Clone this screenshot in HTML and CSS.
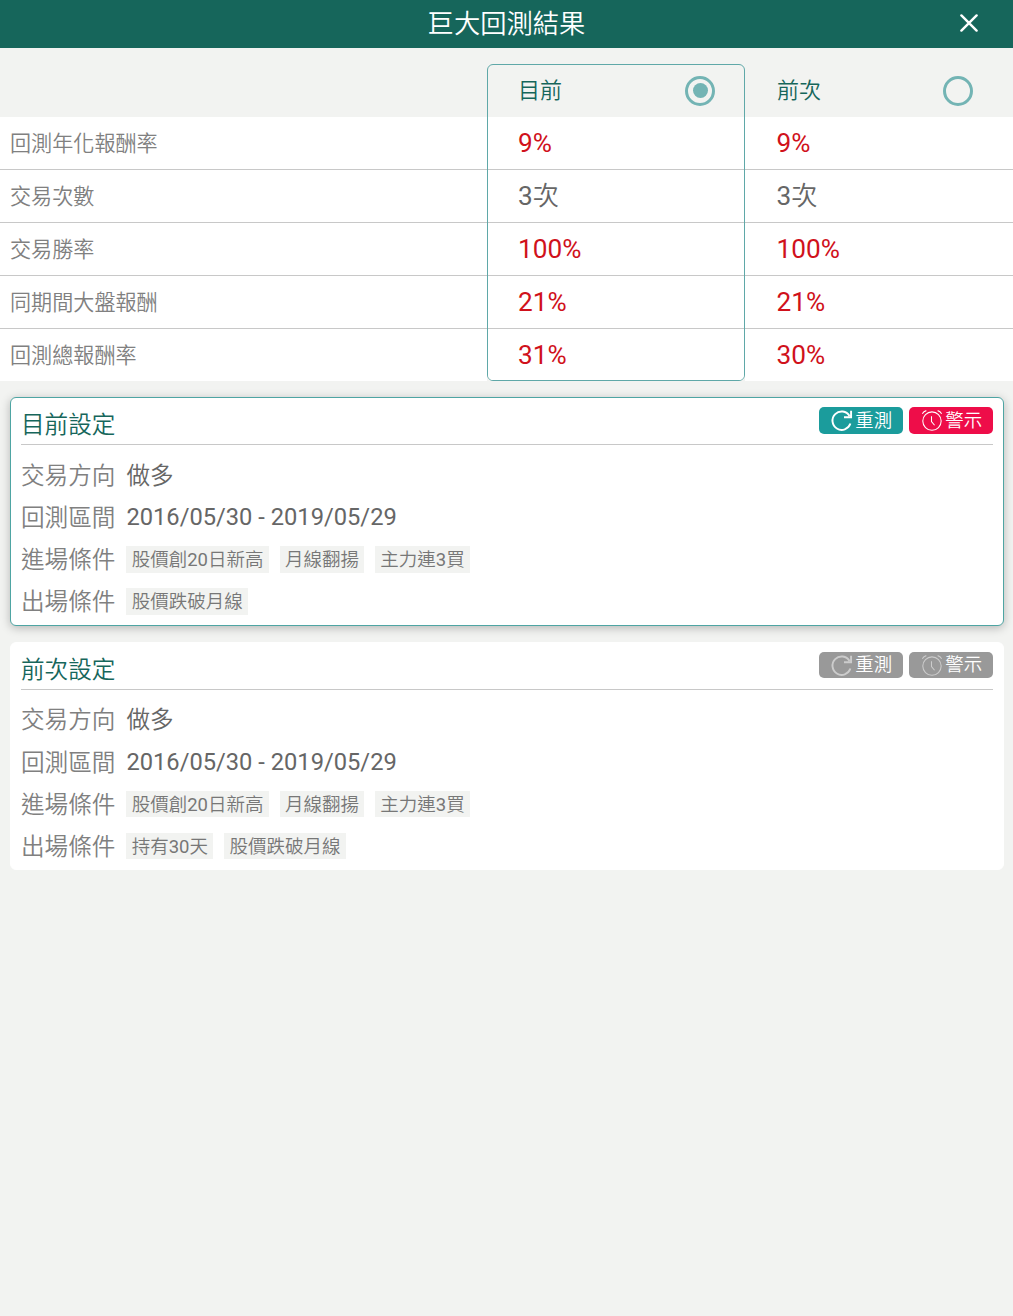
FILE: index.html
```html
<!DOCTYPE html>
<html lang="zh-Hant">
<head>
<meta charset="utf-8">
<title>巨大回測結果</title>
<link rel="stylesheet" href="styles.css">
</head>
<body>
<svg class="sprite" aria-hidden="true">
  <symbol id="reload" viewBox="0 0 24 24"><path d="M20.4 7.2A9.6 9.6 0 1 0 21.3 15.2M14.6 8.6h7.4V1.8" fill="none" stroke="currentColor" stroke-width="2"/></symbol>
  <symbol id="alarm" viewBox="0 0 24 24"><path d="M12.5 3a9.6 9.6 0 1 0 0 19.2a9.6 9.6 0 0 0 0-19.2M12 7.5v5.5l3.2 4M2.4 5Q3.8 2.4 6.6 1.7M22.6 5Q21.2 2.4 18.4 1.7" fill="none" stroke="currentColor" stroke-width="1.1"/></symbol>
</svg>
<header class="topbar">
  <h1>巨大回測結果</h1>
  <button class="close" aria-label="關閉"><svg viewBox="0 0 18 18"><path d="M1.4 1.4l15.2 15.2M16.6 1.4l-15.2 15.2" fill="none" stroke="currentColor" stroke-width="2.4" stroke-linecap="round"/></svg></button>
</header>
<section class="results">
  <div class="col labels">
    <div class="head"></div>
    <div class="cell">回測年化報酬率</div><div class="cell">交易次數</div><div class="cell">交易勝率</div><div class="cell">同期間大盤報酬</div><div class="cell">回測總報酬率</div>
  </div>
  <div class="col current">
    <div class="head"><span>目前</span><i class="radio on"></i></div>
    <div class="cell red">9%</div><div class="cell">3<span class="unit">次</span></div><div class="cell red">100%</div><div class="cell red">21%</div><div class="cell red">31%</div>
  </div>
  <div class="col previous">
    <div class="head"><span>前次</span><i class="radio"></i></div>
    <div class="cell red">9%</div><div class="cell">3<span class="unit">次</span></div><div class="cell red">100%</div><div class="cell red">21%</div><div class="cell red">30%</div>
  </div>
</section>
<section class="card active">
  <div class="card-head"><h2>目前設定</h2>
    <div class="actions"><button class="btn retest"><svg><use href="#reload"/></svg>重測</button><button class="btn alert"><svg><use href="#alarm"/></svg>警示</button></div>
  </div>
  <dl>
    <div class="row"><dt>交易方向</dt><dd class="direction">做多</dd></div>
    <div class="row"><dt>回測區間</dt><dd class="num">2016/05/30 - 2019/05/29</dd></div>
    <div class="row"><dt>進場條件</dt><dd><span class="tag">股價創<span class="num">20</span>日新高</span><span class="tag">月線翻揚</span><span class="tag">主力連<span class="num">3</span>買</span></dd></div>
    <div class="row"><dt>出場條件</dt><dd><span class="tag">股價跌破月線</span></dd></div>
  </dl>
</section>
<section class="card">
  <div class="card-head"><h2>前次設定</h2>
    <div class="actions"><button class="btn off"><svg><use href="#reload"/></svg>重測</button><button class="btn off"><svg><use href="#alarm"/></svg>警示</button></div>
  </div>
  <dl>
    <div class="row"><dt>交易方向</dt><dd class="direction">做多</dd></div>
    <div class="row"><dt>回測區間</dt><dd class="num">2016/05/30 - 2019/05/29</dd></div>
    <div class="row"><dt>進場條件</dt><dd><span class="tag">股價創<span class="num">20</span>日新高</span><span class="tag">月線翻揚</span><span class="tag">主力連<span class="num">3</span>買</span></dd></div>
    <div class="row"><dt>出場條件</dt><dd><span class="tag">持有<span class="num">30</span>天</span><span class="tag">股價跌破月線</span></dd></div>
  </dl>
</section>
</body>
</html>
```
FILE: styles.css
```css
* { box-sizing: border-box; }
body {
  margin: 0;
  min-height: 1316px;
  background: #f2f3f1;
  color: #666;
  font-family: Roboto, "Noto Sans CJK TC", sans-serif;
  font-weight: 350;
}
h1, h2, dl, dt, dd { margin: 0; font-weight: 350; }
button { border: 0; padding: 0; font: inherit; }
.sprite { display: none; }

.topbar {
  display: grid;
  grid-template-columns: 88px 1fr 88px;
  align-items: center;
  height: 48px;
  background: #16665b;
  color: #fff;
}
.topbar h1 { grid-column: 2; text-align: center; font-size: 26.3px; line-height: 46px; }
.close { justify-self: center; width: 18px; height: 18px; margin-bottom: 2px; background: none; color: #fff; }
.close svg { display: block; width: 18px; height: 18px; }

.results {
  display: grid;
  grid-template-columns: 487px 258px 268px;
  padding-top: 16px;
}
.head {
  display: flex;
  align-items: center;
  justify-content: space-between;
  height: 53px;
  color: #16665b;
  font-size: 22px;
}
.head span { line-height: 30px; }
.cell {
  height: 53px;
  border-bottom: 1px solid #c8c8c8;
  background: #fff;
  font-size: 26.2px;
  font-weight: 400;
  line-height: 53px;
}
.unit { font-weight: 350; }
.cell:last-child { border-bottom-color: #fff; height: 52px; }
.labels .cell { padding-left: 10px; font-size: 21.1px; color: #808080; font-weight: 350; }
.current { border: 1px solid #5fa8a8; border-radius: 6px; overflow: hidden; }
.current .head { height: 52px; padding: 0 29px 1px 30px; }
.current .cell { padding-left: 30px; }
.current .cell:last-child { height: 51px; }
.previous .head { padding: 0 40px 0 32px; }
.previous .cell { padding-left: 31.5px; }
.red { color: #d0111b; }
.radio {
  display: grid;
  place-items: center;
  width: 30px;
  height: 30px;
  border: 3px solid #73b4b4;
  border-radius: 50%;
}
.on::after { content: ""; width: 15px; height: 15px; border-radius: 50%; background: #73b4b4; }

.card {
  height: 228.5px;
  margin: 15.5px 9.5px 0 10px;
  padding: 0 9.5px 0 10px;
  border: 1px solid #fff;
  border-radius: 6px;
  background: #fff;
}
.results + .card { height: 229px; margin-top: 16px; }
.active { border-color: #4ea5a3; box-shadow: 0 2px 10px rgba(0, 0, 0, .25); }
.card-head {
  display: flex;
  justify-content: space-between;
  height: 47px;
  border-bottom: 1px solid #c8c8c8;
}
.card-head h2 { color: #16665b; font-size: 23.6px; line-height: 54px; }
.actions { display: flex; gap: 6px; padding-top: 9.4px; }
.btn {
  display: flex;
  align-items: center;
  justify-content: center;
  gap: 2.5px;
  width: 84px;
  height: 26.6px;
  border-radius: 5px;
  color: #fff;
  font-size: 18.4px;
  line-height: 28px;
}
.btn svg { width: 23px; height: 23px; }
.retest { background: #1b9c9c; }
.alert { background: #ee0d49; }
.off { background: #999; }
.off svg { opacity: .5; }
dl { padding-top: 9px; }
.row { display: flex; align-items: center; gap: 11px; height: 42.2px; font-size: 23.6px; line-height: 42px; }
dt { padding-top: 1.6px; color: #808080; }
dd { display: flex; align-items: center; gap: 10.8px; }
.direction { padding-top: 1.6px; }
.num { font-weight: 400; }
dd.num { font-size: 23.7px; }
.tag {
  height: 26.5px;
  padding: 0 5.3px;
  background: #f2f3f1;
  color: #777;
  font-size: 18.5px;
  line-height: 29px;
}
```
